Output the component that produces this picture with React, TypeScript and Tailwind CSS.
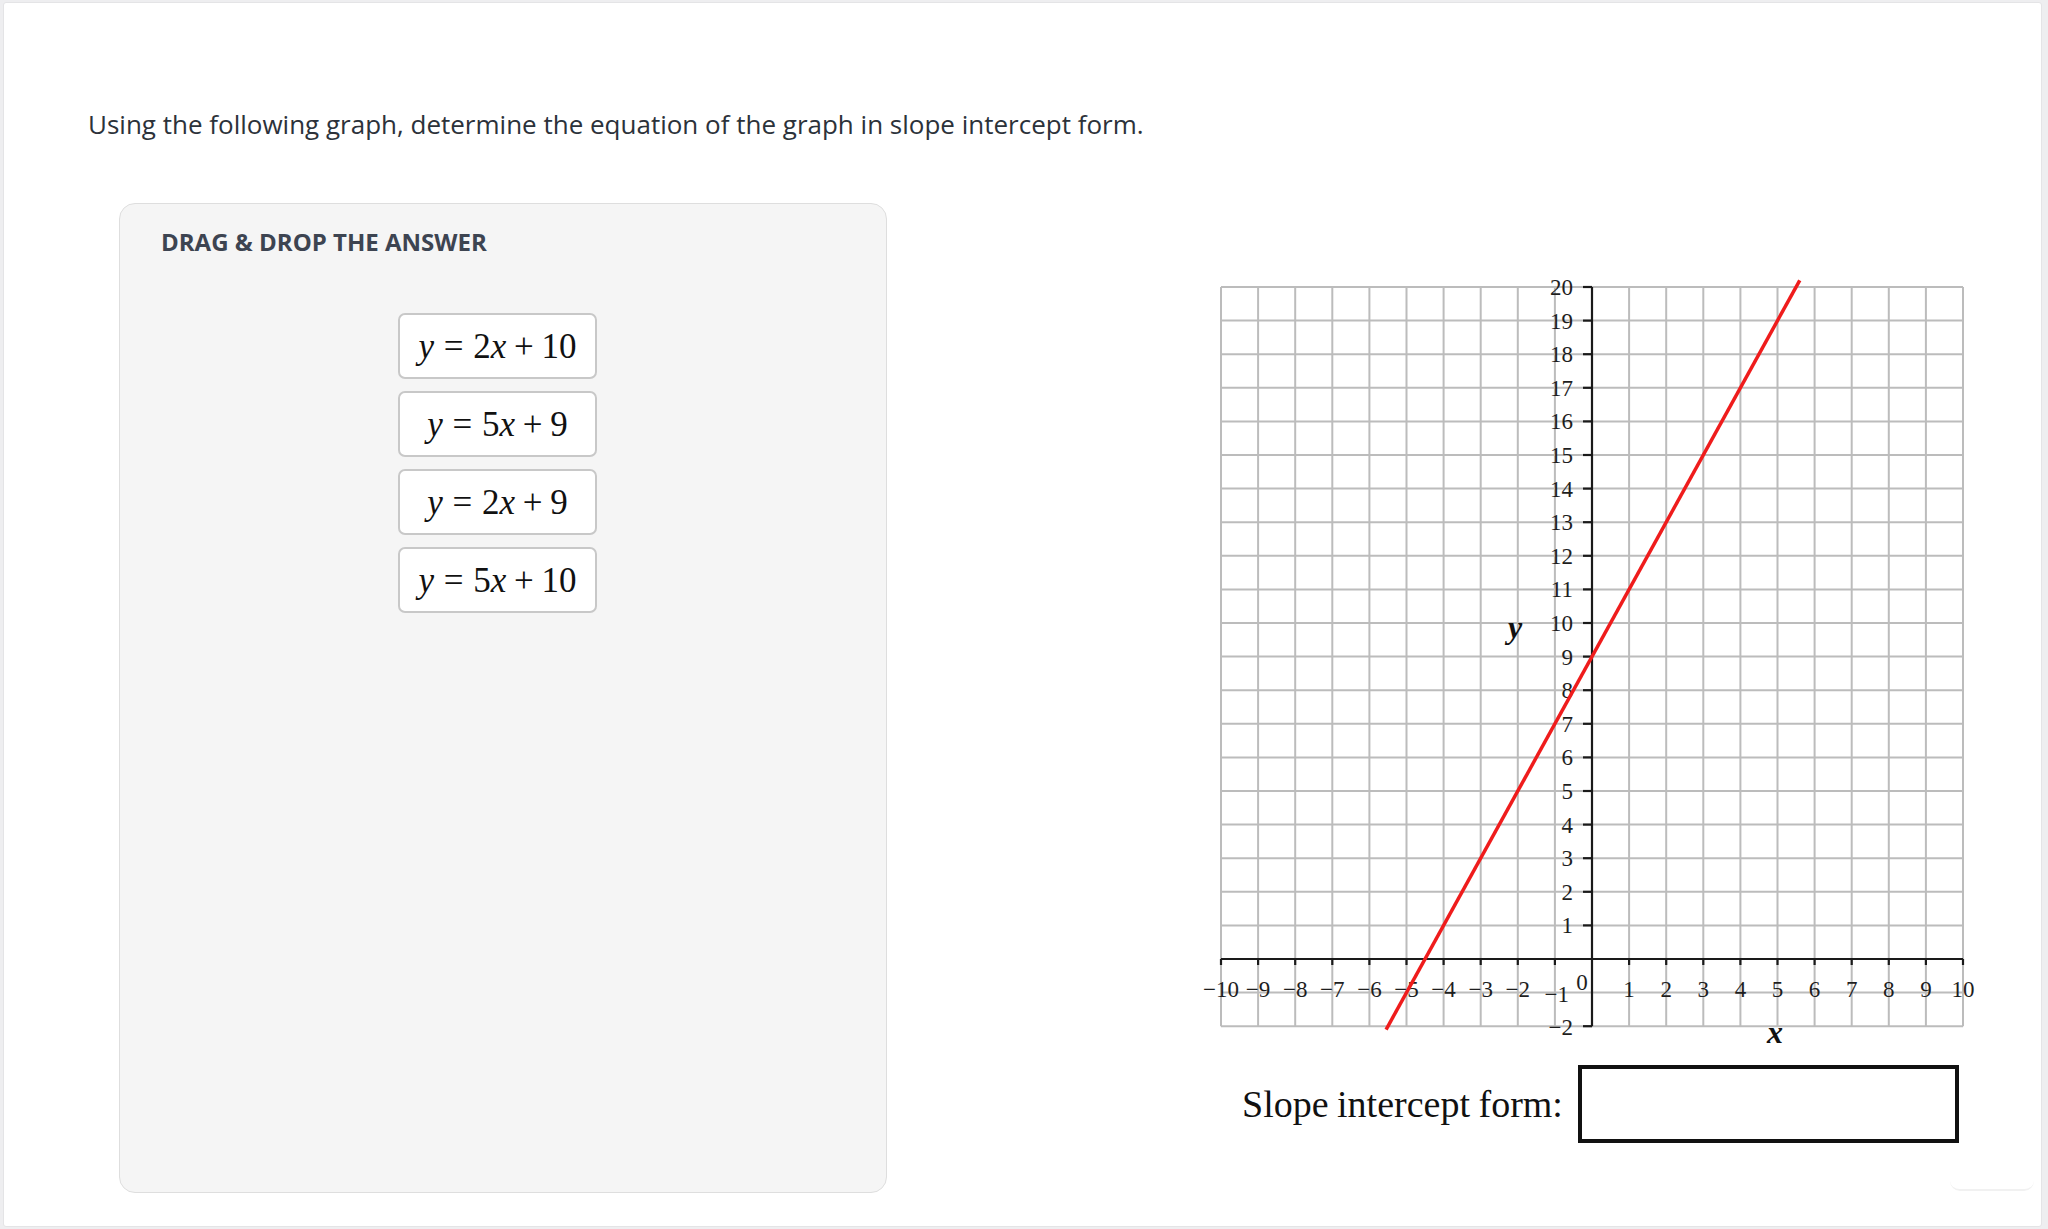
const answers = [
  { m: "2", c: "10" },
  { m: "5", c: "9" },
  { m: "2", c: "9" },
  { m: "5", c: "10" },
];

const X = (x: number) => 26 + 37.1 * (x + 10);
const Y = (y: number) => 18 + 33.6 * (20 - y);

const xs = Array.from({ length: 21 }, (_, i) => i - 10);
const ys = Array.from({ length: 23 }, (_, i) => i - 2);

function MathTile({ m, c }: { m: string; c: string }) {
  return (
    <div className="w-[199px] h-[66px] bg-white border-2 border-[#c8c8c8] rounded-[7px] flex items-center justify-center">
      <span className="font-['Liberation_Serif',serif] text-[35px] leading-none text-[#111] whitespace-nowrap">
        <i>y</i>
        <span className="mx-[0.2778em]">=</span>
        {m}
        <i>x</i>
        <span className="mx-[0.2222em]">+</span>
        {c}
      </span>
    </div>
  );
}

function Graph() {
  return (
    <svg width="780" height="790" viewBox="0 0 780 790" className="block">
      <g stroke="#bcbcbc" strokeWidth="2">
        {xs.map((x) => (
          <line key={"v" + x} x1={X(x)} y1={Y(20)} x2={X(x)} y2={Y(-2)} />
        ))}
        {ys.map((y) => (
          <line key={"h" + y} x1={X(-10)} y1={Y(y)} x2={X(10)} y2={Y(y)} />
        ))}
      </g>
      <g stroke="#1a1a1a" strokeWidth="2.2">
        <line x1={X(-10)} y1={Y(0)} x2={X(10)} y2={Y(0)} />
        <line x1={X(0)} y1={Y(20)} x2={X(0)} y2={Y(-2)} />
        {xs
          .filter((x) => x !== 0)
          .map((x) => (
            <line key={"tx" + x} x1={X(x)} y1={Y(0)} x2={X(x)} y2={Y(0) + 6} />
          ))}
        {ys
          .filter((y) => y !== 0 && y !== -1)
          .map((y) => (
            <line key={"ty" + y} x1={X(0) - 9} y1={Y(y)} x2={X(0)} y2={Y(y)} />
          ))}
      </g>
      <g fill="#1e1e1e" fontFamily="'Liberation Serif', serif" fontSize="23">
        {ys
          .filter((y) => y > 0)
          .map((y) => (
            <text key={"ly" + y} x={X(0) - 19} y={Y(y) + 8} textAnchor="end">
              {y}
            </text>
          ))}
        <text x={X(0) - 19} y={Y(-2) + 9} textAnchor="end">
          −2
        </text>
        <text x={X(0) - 23} y={Y(-1) + 9} textAnchor="end">
          −1
        </text>
        <text x={X(0) - 10} y={Y(0) + 31} textAnchor="middle">
          0
        </text>
        {xs
          .filter((x) => x !== 0 && x !== -1)
          .map((x) => (
            <text key={"lx" + x} x={X(x)} y={Y(0) + 38} textAnchor="middle">
              {x < 0 ? "−" + Math.abs(x) : x}
            </text>
          ))}
      </g>
      <g fill="#111" fontFamily="'Liberation Serif', serif" fontSize="32" fontStyle="italic" fontWeight="bold">
        <text x={320} y={369} textAnchor="middle">
          y
        </text>
        <text x={580} y={774} textAnchor="middle">
          x
        </text>
      </g>
      <line
        x1={X(-5.55)}
        y1={Y(-2.1)}
        x2={X(5.6)}
        y2={Y(20.2)}
        stroke="#ef1c1c"
        strokeWidth="3.5"
      />
    </svg>
  );
}

export default function App() {
  return (
    <div className="min-h-screen bg-[#eeeef0] pt-[2px] pl-[3px] pr-[6px] pb-[2px] font-['Open_Sans',sans-serif]">
      <div className="relative h-[1225px] bg-white border border-[#e4e4e6] rounded-[3px] pl-[84px] pt-[102px]">
        <p className="text-[26px] leading-[1.5] text-[#2c323a]">
          Using the following graph, determine the equation of the graph in slope intercept form.
        </p>

        <div className="flex items-start mt-[59px]">
          <div className="ml-[31px] w-[768px] h-[990px] shrink-0 bg-[#f5f5f5] border border-[#dedede] rounded-[16px] pl-[41px] pt-[20px]">
            <h2 className="text-[24px] leading-[1.5] font-bold text-[#3d4451]">DRAG &amp; DROP THE ANSWER</h2>
            <div className="mt-[53px] ml-[237px] flex flex-col gap-[12px]">
              {answers.map((a) => (
                <MathTile key={a.m + a.c} m={a.m} c={a.c} />
              ))}
            </div>
          </div>

          <div className="ml-[308px] mt-[66px] shrink-0">
            <Graph />
            <div className="flex items-center mt-[6px] pl-[47px]">
              <span className="font-['Liberation_Serif',serif] text-[38px] leading-none text-[#111] [word-spacing:-1px]">
                Slope intercept form:
              </span>
              <div className="ml-[15px] w-[381px] h-[78px] border-4 border-[#111] bg-white" />
            </div>
          </div>
        </div>

        <div className="absolute right-[7px] bottom-[35px] w-[84px] h-[20px] rounded-b-[10px] border-b-2 border-[#f1f1f1]" />
      </div>
    </div>
  );
}
